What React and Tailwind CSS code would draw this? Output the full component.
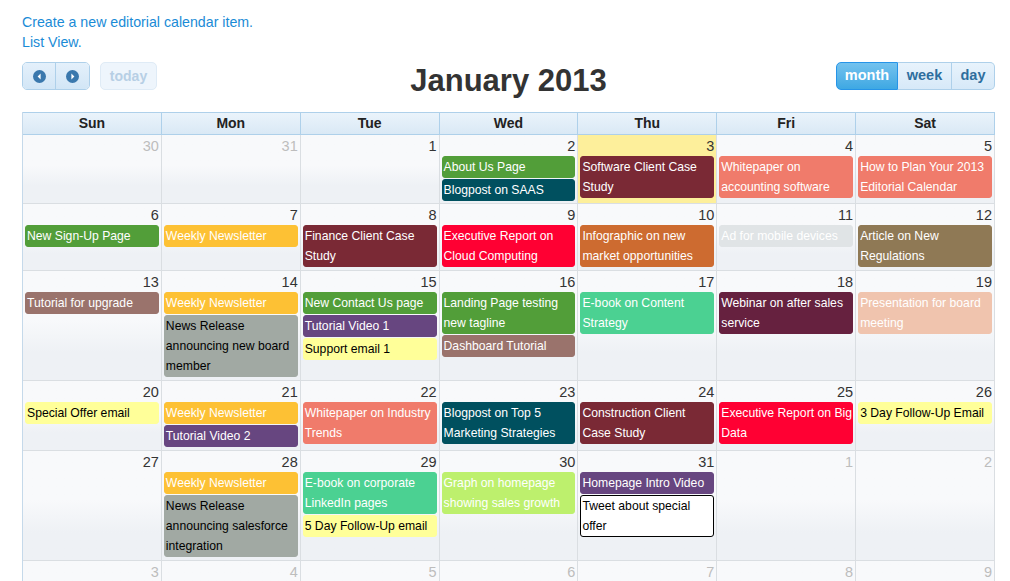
import React from 'react';

// event colour presets
const C = {
  green: 'bg-[#529e39] border-[#529e39] text-white',
  teal: 'bg-[#00505f] border-[#00505f] text-white',
  maroon: 'bg-[#7a2935] border-[#7a2935] text-white',
  salmon: 'bg-[#f07b6b] border-[#f07b6b] text-white',
  red: 'bg-[#ff0033] border-[#ff0033] text-white',
  orange: 'bg-[#cd6b30] border-[#cd6b30] text-white',
  mist: 'bg-[#e0e4e6] border-[#e0e4e6] text-white',
  olive: 'bg-[#8f7955] border-[#8f7955] text-white',
  amber: 'bg-[#fdc134] border-[#fdc134] text-white',
  mauve: 'bg-[#9a736c] border-[#9a736c] text-white',
  gray: 'bg-[#a1a9a3] border-[#a1a9a3] text-black',
  purple: 'bg-[#674680] border-[#674680] text-white',
  lemon: 'bg-[#ffff99] border-[#ffff99] text-black',
  mint: 'bg-[#4bd192] border-[#4bd192] text-white',
  plum: 'bg-[#66213f] border-[#66213f] text-white',
  peach: 'bg-[#f0c4ae] border-[#f0c4ae] text-white',
  lime: 'bg-[#bdf06d] border-[#bdf06d] text-white',
  outline: 'bg-white border-black text-black',
};

// row minimum heights (border-box, bottom border included)
const rowH = ['min-h-[69px]', 'min-h-[67px]', 'min-h-[110px]', 'min-h-[70px]', 'min-h-[110px]', 'min-h-[66px]'];

const weeks = [
  [
    { n: 30, other: true },
    { n: 31, other: true },
    { n: 1 },
    { n: 2, ev: [['About Us Page', 'green'], ['Blogpost on SAAS', 'teal']] },
    { n: 3, today: true, ev: [['Software Client Case Study', 'maroon']] },
    { n: 4, ev: [['Whitepaper on accounting software', 'salmon']] },
    { n: 5, ev: [['How to Plan Your 2013 Editorial Calendar', 'salmon']] },
  ],
  [
    { n: 6, ev: [['New Sign-Up Page', 'green']] },
    { n: 7, ev: [['Weekly Newsletter', 'amber']] },
    { n: 8, ev: [['Finance Client Case Study', 'maroon']] },
    { n: 9, ev: [['Executive Report on Cloud Computing', 'red']] },
    { n: 10, ev: [['Infographic on new market opportunities', 'orange']] },
    { n: 11, ev: [['Ad for mobile devices', 'mist']] },
    { n: 12, ev: [['Article on New Regulations', 'olive']] },
  ],
  [
    { n: 13, ev: [['Tutorial for upgrade', 'mauve']] },
    { n: 14, ev: [['Weekly Newsletter', 'amber'], ['News Release announcing new board member', 'gray']] },
    { n: 15, ev: [['New Contact Us page', 'green'], ['Tutorial Video 1', 'purple'], ['Support email 1', 'lemon']] },
    { n: 16, ev: [['Landing Page testing new tagline', 'green'], ['Dashboard Tutorial', 'mauve']] },
    { n: 17, ev: [['E-book on Content Strategy', 'mint']] },
    { n: 18, ev: [['Webinar on after sales service', 'plum']] },
    { n: 19, ev: [['Presentation for board meeting', 'peach']] },
  ],
  [
    { n: 20, ev: [['Special Offer email', 'lemon']] },
    { n: 21, ev: [['Weekly Newsletter', 'amber'], ['Tutorial Video 2', 'purple']] },
    { n: 22, ev: [['Whitepaper on Industry Trends', 'salmon']] },
    { n: 23, ev: [['Blogpost on Top 5 Marketing Strategies', 'teal']] },
    { n: 24, ev: [['Construction Client Case Study', 'maroon']] },
    { n: 25, ev: [['Executive Report on Big Data', 'red']] },
    { n: 26, ev: [['3 Day Follow-Up Email', 'lemon']] },
  ],
  [
    { n: 27 },
    { n: 28, ev: [['Weekly Newsletter', 'amber'], ['News Release announcing salesforce integration', 'gray']] },
    { n: 29, ev: [['E-book on corporate LinkedIn pages', 'mint'], ['5 Day Follow-Up email', 'lemon']] },
    { n: 30, ev: [['Graph on homepage showing sales growth', 'lime']] },
    { n: 31, ev: [['Homepage Intro Video', 'purple'], ['Tweet about special offer', 'outline']] },
    { n: 1, other: true },
    { n: 2, other: true },
  ],
  [
    { n: 3, other: true },
    { n: 4, other: true },
    { n: 5, other: true },
    { n: 6, other: true },
    { n: 7, other: true },
    { n: 8, other: true },
    { n: 9, other: true },
  ],
];

const days = ['Sun', 'Mon', 'Tue', 'Wed', 'Thu', 'Fri', 'Sat'];

const Arrow = ({ dir }) => (
  <svg width="13" height="13" viewBox="0 0 13 13">
    <circle cx="6.5" cy="6.5" r="6.5" fill="#3a78ad" />
    {dir === 'left' ? (
      <path d="M7.6 3.6 L4.6 6.5 L7.6 9.4 Z" fill="#fff" />
    ) : (
      <path d="M5.4 3.6 L8.4 6.5 L5.4 9.4 Z" fill="#fff" />
    )}
  </svg>
);

const DayCell = ({ d, h }) => (
  <div
    className={`border-r border-b border-[#dadee2] pb-[1px] ${h} ${
      d.today
        ? 'bg-[#fdef9b]'
        : 'bg-gradient-to-b from-[#f8f9fb] from-45% to-[#eef1f5] to-75%'
    }`}
  >
    <div
      className={`h-[21px] text-right pr-[2px] pt-[1px] text-[14.5px] leading-[20px] ${
        d.other ? 'text-[#bdbdbd]' : 'text-[#333]'
      }`}
    >
      {d.n}
    </div>
    {(d.ev || []).map(([t, c], i) => (
      <div
        key={i}
        className={`mx-[2px] mb-[1px] border rounded-[3px] pl-[1px] text-[12.2px] leading-[20px] ${C[c]}`}
      >
        {t}
      </div>
    ))}
  </div>
);

export default function App() {
  return (
    <div className="w-[1010px] h-[581px] overflow-hidden bg-white font-['Liberation_Sans',Arial,sans-serif] text-[14px] pl-[22px] pt-[12px]">
      <div className="text-[#1a8bd6] text-[14.2px] leading-[20px]">
        <div>Create a new editorial calendar item.</div>
        <div>List View.</div>
      </div>

      <div className="w-[973px] grid grid-cols-3 items-start mt-[10px] mb-[22px] h-[28px]">
        <div className="flex items-center">
          <div className="flex h-[28px] rounded-[5px] border border-[#aed0ea] overflow-hidden">
            <button className="w-[33px] flex items-center justify-center bg-gradient-to-b from-[#e4f0fb] to-[#d2e6f6] border-r border-[#aed0ea]">
              <Arrow dir="left" />
            </button>
            <button className="w-[33px] flex items-center justify-center bg-gradient-to-b from-[#e4f0fb] to-[#d2e6f6]">
              <Arrow dir="right" />
            </button>
          </div>
          <button className="ml-[10px] h-[28px] w-[57px] rounded-[5px] border border-[#dfebf6] bg-[#eef5fc] text-[#b7cfe5] font-bold text-[14px]">
            today
          </button>
        </div>
        <h2 className="justify-self-center mt-[5px] text-[31px] font-bold text-[#333] leading-[28px]">January 2013</h2>
        <div className="justify-self-end flex h-[28px] text-[14.5px] font-bold">
          <button className="w-[62px] rounded-l-[5px] border border-[#2694e8] bg-gradient-to-b from-[#73c2ee] to-[#3da8e3] text-white">
            month
          </button>
          <button className="w-[54px] border-y border-r border-[#aed0ea] bg-gradient-to-b from-[#e8f3fc] to-[#d7e9f8] text-[#2e6e9e]">
            week
          </button>
          <button className="w-[43px] rounded-r-[5px] border-y border-r border-[#aed0ea] bg-gradient-to-b from-[#e8f3fc] to-[#d7e9f8] text-[#2e6e9e]">
            day
          </button>
        </div>
      </div>

      <div className="w-[973px] border-l border-[#c5d9ea]">
        <div className="grid grid-cols-7 border-t border-[#aed0ea] bg-gradient-to-b from-[#eaf3fb] to-[#d9e8f5]">
          {days.map((d) => (
            <div
              key={d}
              className="h-[22px] border-r border-b border-[#aed0ea] text-center font-bold text-[#222] leading-[21px]"
            >
              {d}
            </div>
          ))}
        </div>
        {weeks.map((w, i) => (
          <div key={i} className="grid grid-cols-7">
            {w.map((d, j) => (
              <DayCell key={j} d={d} h={rowH[i]} />
            ))}
          </div>
        ))}
      </div>
    </div>
  );
}
